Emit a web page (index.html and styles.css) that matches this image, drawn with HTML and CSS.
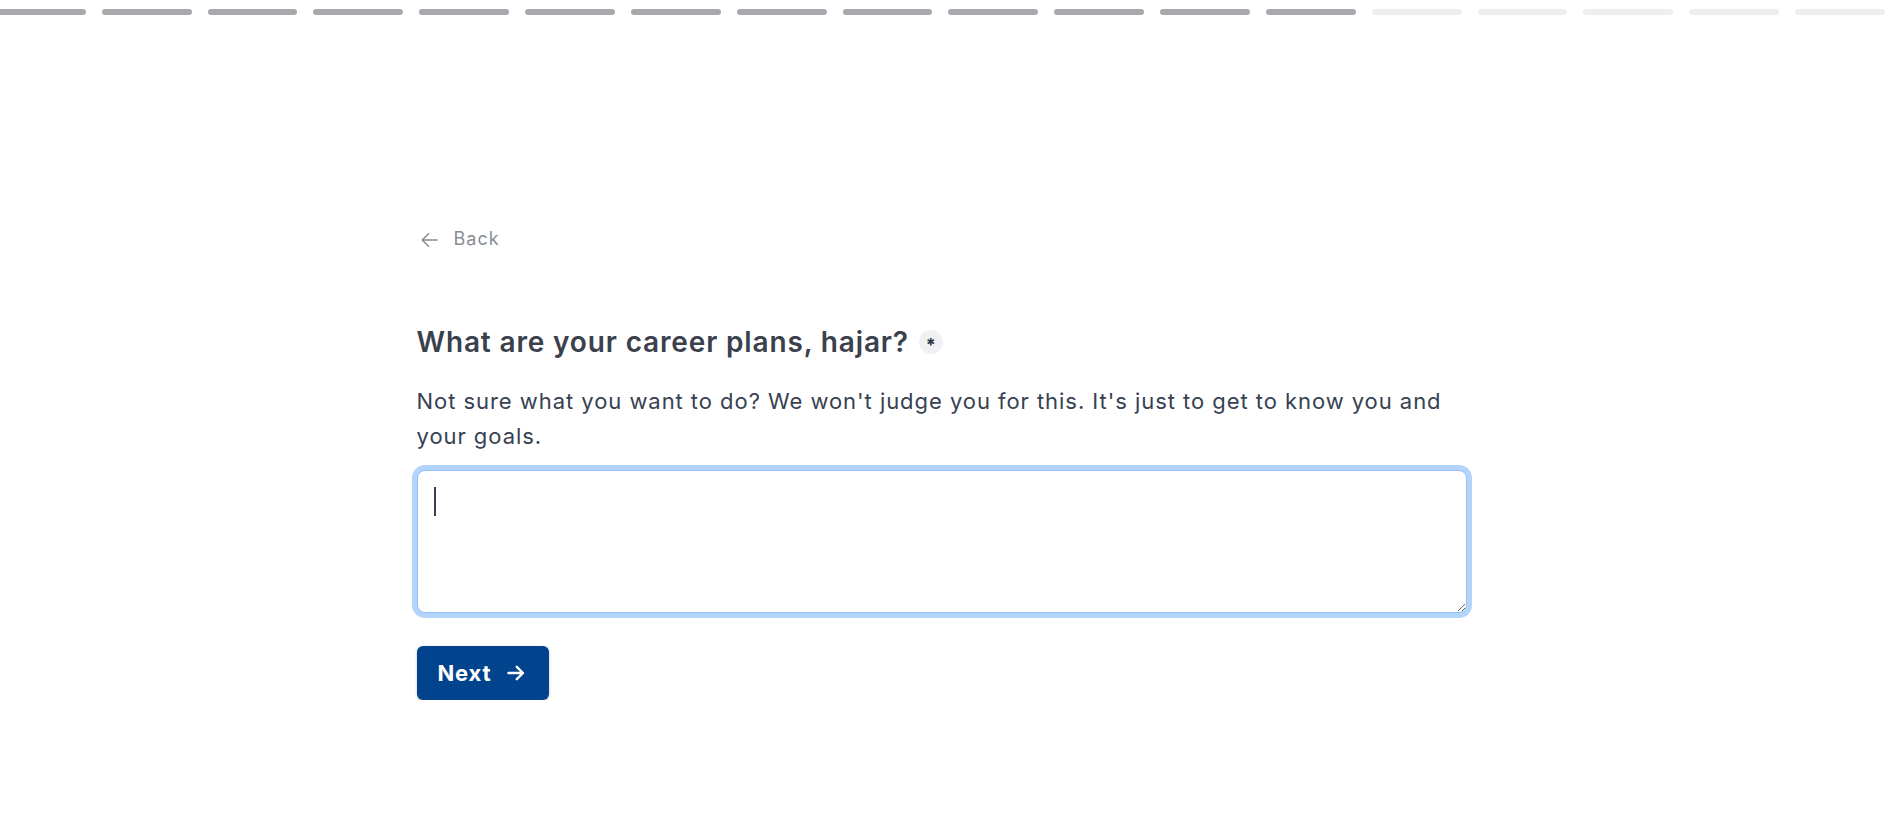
FILE: index.html
```html
<!DOCTYPE html>
<html lang="en">
<head>
<meta charset="utf-8">
<title>Career plans</title>
<link rel="stylesheet" href="styles.css">
</head>
<body>
<div class="progress">
  <span class="seg done"></span><span class="seg done"></span><span class="seg done"></span>
  <span class="seg done"></span><span class="seg done"></span><span class="seg done"></span>
  <span class="seg done"></span><span class="seg done"></span><span class="seg done"></span>
  <span class="seg done"></span><span class="seg done"></span><span class="seg done"></span>
  <span class="seg done"></span><span class="seg"></span><span class="seg"></span>
  <span class="seg"></span><span class="seg"></span><span class="seg"></span>
</div>
<main class="page">
  <div class="content">
    <a class="back" href="#">
      <svg class="back-icon" viewBox="0 0 17 16" width="17" height="16" aria-hidden="true"><path d="M16 8H1.2M7.5 1.7L1.2 8l6.3 6.3" fill="none" stroke="currentColor" stroke-width="1.6" stroke-linecap="round" stroke-linejoin="round"/></svg>
      <span>Back</span>
    </a>
    <div class="title-row">
      <h1 class="title">What are your career plans, hajar?</h1>
      <span class="required">*</span>
    </div>
    <p class="lead">Not sure what you want to do? We won't judge you for this. It's just to get to know you and your goals.</p>
    <div class="field">
      <textarea class="answer" aria-label="Career plans"></textarea>
      <span class="caret"></span>
    </div>
    <button class="next" type="button">
      <span>Next</span>
      <svg viewBox="0 0 18 16" width="18" height="16" aria-hidden="true"><path d="M1.5 8h14.5M9.8 1.8L16 8l-6.2 6.2" fill="none" stroke="currentColor" stroke-width="2.4" stroke-linecap="round" stroke-linejoin="round"/></svg>
    </button>
  </div>
</main>
</body>
</html>
```

FILE: styles.css
```css
* { box-sizing: border-box; }

html, body {
  margin: 0;
  background: #ffffff;
  font-family: "Inter", "Noto Sans", "Liberation Sans", sans-serif;
}

.progress {
  display: flex;
  gap: 16px;
  width: 1889px;
  margin: 9px 0 0 -4px;
}

.seg {
  flex: 1;
  height: 6px;
  border-radius: 3px;
  background: #eeeeee;
}

.seg.done {
  background: #a7a9ac;
}

.page {
  width: calc(100% - 17px);
}

.content {
  width: 1050px;
  margin: 0 auto;
  padding-top: 212px;
}

.back {
  display: inline-flex;
  align-items: center;
  gap: 16px;
  margin-left: 4px;
  font-size: 18px;
  line-height: 24px;
  letter-spacing: 1px;
  color: #878d96;
  text-decoration: none;
}

.back-icon {
  display: block;
  margin-top: 2px;
}

.title-row {
  display: flex;
  align-items: center;
  gap: 10px;
  margin-top: 72px;
}

.title {
  margin: 0;
  font-size: 28px;
  line-height: 36px;
  font-weight: 600;
  letter-spacing: 0.85px;
  color: #3a414d;
}

.required {
  display: flex;
  align-items: center;
  justify-content: center;
  width: 24px;
  height: 24px;
  border-radius: 50%;
  background: #f0f1f3;
  color: #2f3540;
  font-size: 18px;
  font-weight: 700;
  line-height: 1;
  padding-top: 5px;
}

.lead {
  margin: 24px 0 0;
  font-size: 22px;
  line-height: 35px;
  letter-spacing: 0.95px;
  color: #374151;
}

.field {
  position: relative;
  margin-top: 16px;
}

.answer {
  display: block;
  width: 100%;
  height: 143px;
  padding: 14px 16px;
  border: 1px solid #93bff5;
  border-radius: 8px;
  box-shadow: 0 0 0 5px #b3d5fc;
  font-family: inherit;
  font-size: 22px;
  color: #374151;
  outline: none;
  resize: vertical;
}

.caret {
  position: absolute;
  left: 17px;
  top: 17px;
  width: 2px;
  height: 29px;
  background: #374151;
}

.next {
  display: flex;
  align-items: center;
  gap: 16px;
  height: 54px;
  margin-top: 33px;
  padding: 0 24px 0 21px;
  border: none;
  border-radius: 6px;
  background: #02438e;
  color: #ffffff;
  font-family: inherit;
  font-size: 22px;
  font-weight: 700;
  letter-spacing: 0.8px;
  box-shadow: 0 1px 3px rgba(0, 0, 0, 0.25);
  cursor: pointer;
}

.next svg {
  display: block;
}
```
